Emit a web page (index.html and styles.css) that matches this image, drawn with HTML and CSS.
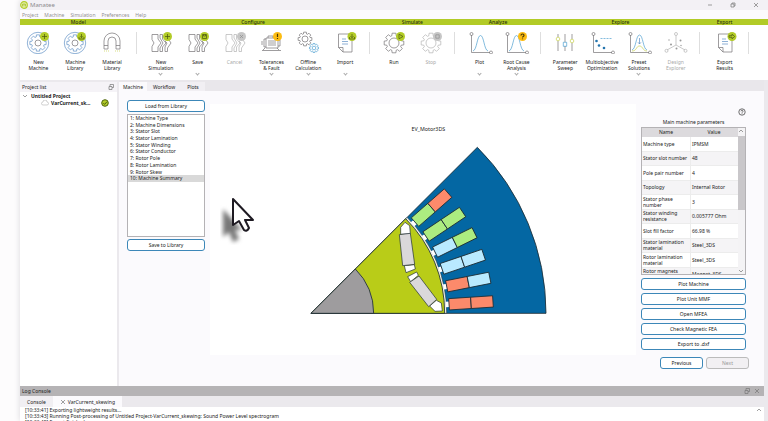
FILE: index.html
```html
<!DOCTYPE html>
<html lang="en">
<head>
<meta charset="utf-8">
<title>Manatee</title>
<link rel="stylesheet" href="styles.css">
</head>
<body>
<svg class="defs" aria-hidden="true">
  <defs>
    <path id="gear" vector-effect="non-scaling-stroke" d="M-2.2-7.2L-1.9-9.8 1.9-9.8 2.2-7.2 3.5-6.65 5.6-8.3 8.3-5.6 6.65-3.5 7.2-2.2 9.8-1.9 9.8 1.9 7.2 2.2 6.65 3.5 8.3 5.6 5.6 8.3 3.5 6.65 2.2 7.2 1.9 9.8-1.9 9.8-2.2 7.2-3.5 6.65-5.6 8.3-8.3 5.6-6.65 3.5-7.2 2.2-9.8 1.9-9.8-1.9-7.2-2.2-6.65-3.5-8.3-5.6-5.6-8.3-3.5-6.65Z"/>
    <g id="wheel">
      <circle class="steel" cx="18" cy="13" r="10.7"/>
      <use class="steel" href="#gear" transform="translate(18 13) scale(.83)"/>
      <circle cx="18" cy="13" r="3"/>
    </g>
    <g id="plates">
      <path d="M9 4.500h6v4.500l3 4-3 4v4.500H9V16.500l2-3.500-2-3.500z"/>
      <path d="M17 4.500h2.500V9l3.500 4-3.500 4v4.500H17V18l3-5-3-5z"/>
      <path d="M22 11l2 2-2 4v4.500h2.500V18l3.500-5-2-3"/>
    </g>
    <path id="sheet" d="M11.500 4H25v18H16l-4.500-4.500zM16 22v-4.500h-4.500"/>
    <g id="axes">
      <path d="M9.500 5v17.500H28"/><circle cx="9.500" cy="4" r="1.500"/><circle cx="29" cy="22.500" r="1.500"/>
    </g>
  </defs>
</svg>
<div class="window">
  <header class="titlebar">
    <svg class="logo" viewBox="0 0 8 8"><circle cx="4" cy="4" r="3.300" fill="#e9f2b5" stroke="#b2cc2c" stroke-width="1.200"/><path d="M2.500 5.500V3h3v2.500M4 3v2.500" fill="none" stroke="#a5bf2c" stroke-width=".8"/></svg>
    <h1>Manatee</h1>
    <div class="win-buttons">
      <button aria-label="Minimize"><svg viewBox="0 0 6 6"><path d="M1 3h4"/></svg></button>
      <button aria-label="Restore"><svg viewBox="0 0 6 6"><path d="M1 2h3v3H1zM2 2V1h3v3H4"/></svg></button>
      <button aria-label="Close"><svg viewBox="0 0 6 6"><path d="M1 1l4 4M5 1L1 5"/></svg></button>
    </div>
  </header>
  <nav class="menubar"><button>Project</button><button>Machine</button><button>Simulation</button><button>Preferences</button><button>Help</button></nav>

  <div class="ribbon">
    <section class="group n3 first"><h2>Model</h2><div class="tools">
      <button class="tool"><svg class="icon" viewBox="0 0 36 24"><use href="#wheel"/><g class="badge"><circle cx="24.500" cy="6.500" r="4.500"/><path d="M22 6.500h5M24.500 4v5"/></g></svg><span>New<br>Machine</span></button>
      <button class="tool"><svg class="icon" viewBox="0 0 36 24"><use href="#wheel"/><g class="badge"><circle cx="24.500" cy="6.500" r="4.500"/><path d="M24.500 4v3.500M23 6.200l1.500 1.500L26 6.200M22 7v2h5V7"/></g></svg><span>Machine<br>Library</span></button>
      <button class="tool"><svg class="icon" viewBox="0 0 36 24"><path d="M10 19v-8a8 8 0 0 1 16 0v8h-4v-8a4 4 0 0 0-8 0v8zM10 15.500h4M22 15.500h4"/><path class="lime" stroke-dasharray="1 1" d="M10 21h5M21 21h5"/></svg><span>Material<br>Library</span></button>
    </div></section>
    <section class="group n6"><h2>Configure</h2><div class="tools">
      <button class="tool"><svg class="icon" viewBox="0 0 36 24"><use href="#plates"/><g class="badge"><circle cx="24.500" cy="6.500" r="4.500"/><path d="M22 6.500h5M24.500 4v5"/></g></svg><span>New<br>Simulation</span><i class="more"></i></button>
      <button class="tool"><svg class="icon" viewBox="0 0 36 24"><use href="#plates"/><g class="badge"><circle cx="24.500" cy="6.500" r="4.500"/><path d="M22.500 4.500h4v4h-4zM23.500 4.500v1.500h2V4.500"/></g></svg><span>Save</span><i class="more"></i></button>
      <button class="tool" disabled><svg class="icon" viewBox="0 0 36 24"><use href="#plates"/><g class="badge"><circle cx="24.500" cy="6.500" r="4.500"/><path d="M23 5l3 3M26 5l-3 3"/></g></svg><span>Cancel</span></button>
      <button class="tool"><svg class="icon" viewBox="0 0 36 24"><path d="M13 8h12v10H13zM13 9h-2v8h2M9 11v4M25 10h2v6h-2M15 8V6h5v2M15 11h8M15 13h8M15 15h8M12 18l-2 2M24 18l2 2M9 20.500h19"/><g class="badge warn"><circle cx="24.500" cy="6.500" r="4.500"/><path d="M24.500 3.800v3.200M24.500 8v1"/></g></svg><span>Tolerances<br>&amp; Fault</span><i class="more"></i></button>
      <button class="tool"><svg class="icon" viewBox="0 0 36 24"><use href="#gear" transform="translate(15 9) scale(.7)"/><circle cx="15" cy="9" r="3"/><g class="sky"><use href="#gear" transform="translate(24 18) scale(.46)"/><circle cx="24" cy="18" r="1.800"/></g></svg><span>Offline<br>Calculation</span><i class="more"></i></button>
      <button class="tool"><svg class="icon" viewBox="0 0 36 24"><use href="#sheet"/><path class="blue" d="M15 9h4M15 11.500h6M15 14h6"/><g class="badge"><circle cx="25" cy="6.500" r="4.500"/><path d="M25 4v3.500M23.500 6.200l1.500 1.500 1.500-1.500M22.500 7v2h5V7"/></g></svg><span>Import</span><i class="more"></i></button>
    </div></section>
    <section class="group n2"><h2>Simulate</h2><div class="tools">
      <button class="tool"><svg class="icon" viewBox="0 0 36 24"><use href="#gear" transform="translate(18 13)"/><circle cx="18" cy="13" r="5"/><g class="badge"><circle cx="24.500" cy="6.500" r="4.500"/><path d="M23 4.200l4 2.300-4 2.300z"/></g></svg><span>Run</span></button>
      <button class="tool" disabled><svg class="icon" viewBox="0 0 36 24"><use href="#gear" transform="translate(18 13)"/><circle cx="18" cy="13" r="5"/><g class="badge"><circle cx="24.500" cy="6.500" r="4.500"/><path d="M22.800 4.800h3.400v3.400h-3.400z"/></g></svg><span>Stop</span></button>
    </div></section>
    <section class="group n2"><h2>Analyze</h2><div class="tools">
      <button class="tool"><svg class="icon" viewBox="0 0 36 24"><use href="#axes"/><path class="sky" d="M11 21c4-1 4-15.500 7.500-15.500S22 20 26 21"/></svg><span>Plot</span><i class="more"></i></button>
      <button class="tool"><svg class="icon" viewBox="0 0 36 24"><use href="#axes"/><path class="sky" d="M11 21c4-1 4-15.500 7.500-15.500S22 20 26 21"/><g class="badge warn"><circle cx="24.500" cy="6.500" r="4.500"/><path d="M23 5.500c0-2 3-2 3 0 0 1-1.500 1-1.500 2M24.500 8.500v.8"/></g></svg><span>Root Cause<br>Analysis</span><i class="more"></i></button>
    </div></section>
    <section class="group n4"><h2>Explore</h2><div class="tools">
      <button class="tool"><svg class="icon" viewBox="0 0 36 24"><path d="M11 4v3M11 11v10M18 4v8M18 16v5M25 4v5M25 13v8"/><circle class="lime" cx="11" cy="9" r="1.800"/><path class="sky" d="M16.300 12.300h3.400v4h-3.400z"/><circle class="lime" cx="25" cy="11" r="1.800"/></svg><span>Parameter<br>Sweep</span></button>
      <button class="tool"><svg class="icon" viewBox="0 0 36 24"><use href="#axes"/><g class="dots"><circle cx="12.500" cy="11" r="1.300"/><circle cx="15" cy="15.500" r="1.300"/><circle cx="20" cy="18" r="1.300"/></g><path class="sky" stroke-dasharray="2 1" d="M16.500 8.500h11"/></svg><span>Multiobjective<br>Optimization</span></button>
      <button class="tool"><svg class="icon" viewBox="0 0 36 24"><use href="#axes"/><path class="sky" d="M11 20c4-1 4-15 7.500-15S22 19 26 20"/><path class="lime" d="M11 21c5 0 4-5 7.500-5s3 5 7.500 5"/><path class="blue" d="M18.500 8v6M17 12.300l1.500 1.700 1.500-1.700"/></svg><span>Preset<br>Solutions</span><i class="more"></i></button>
      <button class="tool" disabled><svg class="icon" viewBox="0 0 36 24"><path d="M18 5.500V15L9 20M18 15l9 5"/><circle cx="18" cy="4" r="1.500"/><circle cx="8.500" cy="20.800" r="1.500"/><circle cx="27.500" cy="20.800" r="1.500"/><g class="dots"><circle cx="13" cy="14.500" r="1"/><circle cx="22.500" cy="10.500" r="1"/><circle cx="18.500" cy="18.500" r="1"/><circle cx="11" cy="10" r=".7"/><circle cx="23" cy="15.500" r=".7"/></g></svg><span>Design<br>Explorer</span></button>
    </div></section>
    <section class="group n1"><h2>Export</h2><div class="tools">
      <button class="tool"><svg class="icon" viewBox="0 0 36 24"><use href="#sheet"/><path class="blue" d="M15 9h4M15 11.500h6M15 14h6"/><g class="badge"><circle cx="25" cy="6.500" r="4.500"/><path d="M22 5.700h3V4.200l2.700 2.300L25 8.800V7.300h-3z"/></g></svg><span>Export<br>Results</span></button>
    </div></section>
    <div class="tail"></div>
  </div>

  <div class="workspace">
    <aside class="projects">
      <div class="panel-head"><h2>Project list</h2><button aria-label="Float panel"><svg viewBox="0 0 6 6"><path d="M1 2.500h3v3H1zM2 2.500v-2h3.500v3H4"/></svg></button></div>
      <div class="tree">
        <div class="root"><svg viewBox="0 0 6 6"><path d="M1 2l2 2 2-2"/></svg>Untitled Project</div>
        <div class="leaf"><svg class="cloud" viewBox="0 0 8 6"><path d="M2 5a1.500 1.500 0 0 1 0-3 2 2 0 0 1 4 0 1.500 1.500 0 0 1 0 3z"/></svg><span>VarCurrent_sk...</span><svg class="ok" viewBox="0 0 8 8"><circle cx="4" cy="4" r="3.300"/><path d="M2.300 4l1.300 1.400L6 2.700"/></svg></div>
      </div>
    </aside>
    <main class="main">
      <div class="tabs"><button class="active">Machine</button><button>Workflow</button><button>Plots</button></div>
      <div class="machine">
        <div class="steps">
          <button class="btn">Load from Library</button>
          <div class="list"><ol>
            <li>1: Machine Type</li><li>2: Machine Dimensions</li><li>3: Stator Slot</li><li>4: Stator Lamination</li><li>5: Stator Winding</li><li>6: Stator Conductor</li><li>7: Rotor Pole</li><li>8: Rotor Lamination</li><li>9: Rotor Skew</li><li class="current">10: Machine Summary</li>
          </ol></div>
          <button class="btn">Save to Library</button>
        </div>
        <figure class="plot">
          <svg viewBox="-270 -48 1278 753" role="img" aria-label="Machine section">
            <text x="385" y="33" text-anchor="middle">EV_Motor3DS</text>
            <g stroke="#1c2b33" stroke-width="2.500">
              <path fill="#0467a3" d="M33 580L532 82A705 705 0 0 1 738 580z"/>
              <path fill="#f4f4ee" stroke-width="1.500" d="M33 580L321 292A407 407 0 0 1 440 580z"/>
              <path fill="#b9cc18" d="M33 580L317 296A401 401 0 0 1 434 580z"/>
              <path fill="#9e9c9e" d="M33 580L166 447A188 188 0 0 1 221 580z"/>
              <g fill="#fff" stroke-width="2">
                <path d="M302 343V322L315 307 329 317 331 341zM313 437L343 434 346 447 318 458zM323 470L350 456 355 466 332 485zM389 558L409 541 424 549 427 573 405 574z"/>
                <path fill="#dad8da" d="M298 344L331 340 344 433 308 437zM329 487L357 468 410 538 386 560z"/>
              </g>
              <g transform="translate(33 580)">
                <g transform="rotate(-3.750)"><path class="mouth" d="M405-8h11V8h-11z"/><path class="coral" d="M415-17h66v34h-66z"/><path class="coral" d="M481-17h66v34h-66z"/></g>
                <g transform="rotate(-11.250)"><path class="mouth" d="M405-8h11V8h-11z"/><path class="coral" d="M415-17h66v34h-66z"/><path class="ice" d="M481-17h66v34h-66z"/></g>
                <g transform="rotate(-18.750)"><path class="mouth" d="M405-8h11V8h-11z"/><path class="ice" d="M415-17h66v34h-66z"/><path class="ice" d="M481-17h66v34h-66z"/></g>
                <g transform="rotate(-26.250)"><path class="mouth" d="M405-8h11V8h-11z"/><path class="ice" d="M415-17h66v34h-66z"/><path class="mint" d="M481-17h66v34h-66z"/></g>
                <g transform="rotate(-33.750)"><path class="mouth" d="M405-8h11V8h-11z"/><path class="mint" d="M415-17h66v34h-66z"/><path class="mint" d="M481-17h66v34h-66z"/></g>
                <g transform="rotate(-41.250)"><path class="mouth" d="M405-8h11V8h-11z"/><path class="mint" d="M415-17h66v34h-66z"/><path class="coral" d="M481-17h66v34h-66z"/></g>
              </g>
            </g>
          </svg>
        </figure>
        <div class="summary">
          <button class="help" aria-label="Help"><svg viewBox="0 0 8 8"><circle cx="4" cy="4" r="3.200"/><path d="M3 3.300c0-1.500 2-1.500 2 0 0 .8-1 .7-1 1.500M4 5.400v.7"/></svg></button>
          <h3>Main machine parameters</h3>
          <div class="grid-box">
            <table>
              <thead><tr><th>Name</th><th>Value</th></tr></thead>
              <tbody>
                <tr><td>Machine type</td><td>IPMSM</td></tr>
                <tr><td>Stator slot number</td><td>48</td></tr>
                <tr><td>Pole pair number</td><td>4</td></tr>
                <tr><td>Topology</td><td>Internal Rotor</td></tr>
                <tr><td>Stator phase<br>number</td><td>3</td></tr>
                <tr><td>Stator winding<br>resistance</td><td>0.005777 Ohm</td></tr>
                <tr><td>Slot fill factor</td><td>66.98 %</td></tr>
                <tr><td>Stator lamination<br>material</td><td>Steel_3DS</td></tr>
                <tr><td>Rotor lamination<br>material</td><td>Steel_3DS</td></tr>
                <tr><td>Rotor magnets<br>material</td><td>Magnet_3DS</td></tr>
              </tbody>
            </table>
            <div class="scroll"><svg viewBox="0 0 6 6"><path d="M1 4l2-2 2 2"/></svg><div class="thumb"></div><svg viewBox="0 0 6 6"><path d="M1 2l2 2 2-2"/></svg></div>
          </div>
          <div class="actions">
            <button class="btn">Plot Machine</button><button class="btn">Plot Unit MMF</button><button class="btn">Open MFEA</button><button class="btn">Check Magnetic FEA</button><button class="btn">Export to .dxf</button>
          </div>
          <div class="pager"><button class="btn">Previous</button><button class="btn" disabled>Next</button></div>
        </div>
      </div>
    </main>
  </div>

  <section class="log">
    <div class="log-head"><h2>Log Console</h2><button aria-label="Float console"><svg viewBox="0 0 6 6"><path d="M1 2.500h3v3H1zM2 2.500v-2h3.500v3H4"/></svg></button><button aria-label="Close console"><svg viewBox="0 0 6 6"><path d="M1 1l4 4M5 1L1 5"/></svg></button></div>
    <div class="log-tabs"><button>Console</button><button class="active"><svg viewBox="0 0 6 6"><path d="M1 1l4 4M5 1L1 5"/></svg>VarCurrent_skewing</button></div>
    <div class="lines">
      <div><p>[10:33:41] Exporting lightweight results...</p><p>[10:33:43] Running Post-processing of Untitled Project-VarCurrent_skewing: Sound Power Level spectrogram</p><p>[10:33:45] Export finished.</p></div>
      <svg viewBox="0 0 6 6"><path d="M1 4l2-2 2 2"/></svg>
    </div>
  </section>
</div>
<svg class="cursor" viewBox="0 0 36 50" aria-hidden="true"><path class="shade" d="M3 14v28l6-5 4 10 6-3-4-9h7z"/><path class="arrow" d="M13 4v26l6-4 5 9q3 2 5-2l-4-8h8z"/></svg>
</body>
</html>
```
FILE: styles.css
```css
* { box-sizing: border-box; }
body {
  margin: 0;
  height: 100vh;
  overflow: hidden;
  background: #fdfcfd;
  color: #222;
  font: 5px/6px "Noto Sans", "Open Sans", sans-serif;
}
h1, h2, h3, p, ol, figure { margin: 0; padding: 0; font: inherit; }
button {
  margin: 0;
  padding: 0;
  border: 0;
  background: none;
  color: inherit;
  font: inherit;
}
svg { display: block; flex: none; }
.defs { position: absolute; width: 0; height: 0; }

.window {
  display: flex;
  flex-direction: column;
  height: 100vh;
  margin-left: 20px;
  background: #ebe9ed;
  box-shadow: 0 0 6px #dad8dc;
}
.window button svg, .tree svg, .scroll svg, .lines svg {
  width: 6px;
  height: 6px;
  fill: none;
  stroke: #777;
  stroke-width: .7;
}

.titlebar { display: flex; align-items: center; gap: 2px; height: 10px; background: #f3f1f5; color: #8d8b8e; }
.logo { width: 8px; height: 8px; }
.titlebar h1 { font-size: 6px; }
.win-buttons { display: flex; gap: 17px; margin-left: auto; padding-right: 9px; }
.menubar { display: flex; gap: 6px; height: 9px; padding: 0 2px; background: #fcfbfd; color: #929092; }

.ribbon { display: flex; height: 61px; background: #fff; }
.group { position: relative; padding: 0 6px; text-align: center; }
.first { padding-left: 0; }
.n1 { flex: 1 1 0; }
.n2 { flex: 2 1 0; }
.n3 { flex: 3 1 0; }
.n4 { flex: 4 1 0; }
.n6 { flex: 6 1 0; }
.tail { flex: none; width: 19px; }
.group h2, .tail::before { display: block; height: 6px; margin: 0 -6px; background: #b2cb27; color: #29300d; font-weight: 500; }
.first h2 { margin-left: 0; }
.tail::before { content: ""; margin: 0; }
.group::after { content: ""; position: absolute; right: 0; top: 13px; width: 1px; height: 22px; background: #dedede; }
.tools { display: flex; padding-top: 5px; }
.tool { display: flex; flex: 1 1 0; min-width: 0; flex-direction: column; align-items: center; height: 48px; white-space: nowrap; }
.ribbon .tool .icon { width: 36px; height: 24px; margin-bottom: 5px; stroke: #757376; stroke-width: .7; }
.steel, .icon .blue { stroke: #5f8fc4; }
.icon .sky { stroke: #4d9fd0; }
.icon .lime { stroke: #c5d04d; }
.icon .dots { fill: #2374ad; stroke: none; }
.icon .badge { fill: #b2cb27; stroke: #47550f; }
.icon .badge circle { stroke: none; }
.icon .badge path { fill: none; }
.icon .warn { fill: #fcbc12; stroke: #4c3a05; stroke-width: 1.200; }
.ribbon .tool:disabled { color: #a9a9a9; }
.ribbon .tool:disabled .icon { stroke: #b3b3b3; }
.tool:disabled .icon .badge { fill: #c6c6c6; stroke: #8e8e8e; }
.tool:disabled .icon .dots { fill: #999; }
.more { width: 3px; height: 3px; margin-top: auto; margin-bottom: 3px; border: solid #aaa; border-width: 0 1px 1px 0; transform: rotate(45deg); }

.workspace { display: flex; flex: 1; min-height: 0; margin-right: 4px; }
.projects { width: 97px; padding-top: 2px; }
.panel-head { display: flex; justify-content: space-between; align-items: center; height: 10px; padding: 0 3px 0 2px; background: #f5f3f7; }
.tree { height: calc(100% - 10px); padding-top: 1px; background: #fff; font-weight: 700; }
.root { display: flex; align-items: center; gap: 3px; height: 6px; padding-left: 2px; }
.leaf { display: flex; align-items: center; gap: 2px; height: 8px; padding: 0 8px 0 21px; }
.tree .cloud { width: 8px; stroke: #bbb; }
.tree .ok { width: 8px; height: 8px; margin-left: auto; fill: #b2cb27; stroke: #4f6410; stroke-width: 1; }
.main { display: flex; flex: 1; flex-direction: column; margin-left: 2px; min-width: 0; }
.tabs { display: flex; height: 11px; padding-top: 2px; background: #e9e7eb; }
.tabs button { padding: 0 6px; background: #f1eff3; }
.tabs .active { padding: 0 4px; background: #fbfafd; }
.machine { display: flex; flex: 1; gap: 5px; padding: 9px 15px 0 8px; background: #fbfafd; }
.steps { display: flex; flex-direction: column; gap: 2px; width: 78px; height: 151px; }
.list { flex: 1; border: 1px solid #b4b2b5; background: #fff; }
.steps ol { display: grid; grid-template-rows: repeat(10, 1fr); height: 67px; list-style: none; }
.steps li { padding-left: 2px; line-height: 6px; }
.steps .current { background: #d9d9d9; }
.btn { height: 12px; border: 1px solid #3c87b8; border-radius: 3px; background: #fff; }
.btn:disabled { border-color: #bbb; background: #f2f0f3; color: #999; }
.plot { flex: 1; align-self: flex-start; margin-top: 4px; background: #fff; }
.plot svg { width: 100%; }
.plot text { fill: #222; stroke: none; font-size: 16px; }
.mouth { fill: #fff; stroke: none; }
.coral { fill: #fc8a6b; }
.ice { fill: #b9eaff; }
.mint { fill: #acec80; }

.summary { display: flex; flex-direction: column; width: 108px; padding: 8px 3px 0 0; }
.help { align-self: flex-end; }
.summary .help svg { width: 8px; height: 8px; stroke: #333; }
.summary h3 { margin: 3px 0 2px; text-align: center; }
.grid-box { display: flex; height: 148px; overflow: hidden; border: 1px solid #b4b2b5; background: #fff; }
table { display: grid; flex: 1; grid-template-rows: 9px 145px; height: 154px; line-height: 6px; }
thead, tbody { display: grid; }
tbody { grid-template-rows: repeat(10, 1fr); }
tr { display: grid; grid-template-columns: 1fr 1fr; min-height: 0; }
th { padding: 1px 0; background: #dcdadd; font-weight: 400; }
td { display: grid; align-content: center; padding: 0 1px; border-bottom: 1px solid #ececec; white-space: nowrap; }
td + td { border-left: 1px solid #ececec; }
tbody tr:nth-child(even) { background: #f5f4f6; }
.scroll { display: flex; flex-direction: column; width: 7px; background: #f4f3f5; }
.thumb { height: 74px; margin: 2px 0 auto; background: #c9c7ca; }
.actions { display: flex; flex-direction: column; gap: 3px; padding-top: 3px; }
.pager { display: flex; gap: 3px; margin: 7px -3px 0 19px; }
.pager .btn { flex: 1; }

.log { margin-right: 4px; }
.log-head { display: flex; gap: 4px; align-items: center; height: 10px; padding: 0 4px 0 2px; background: #b5b3b5; }
.log-head h2 { margin-right: auto; }
.log-tabs { display: flex; height: 11px; background: #ebe9ed; }
.log-tabs button { display: flex; align-items: center; gap: 2px; padding: 0 7px; background: #f1eff3; }
.log-tabs .active { background: #fbfafd; }
.lines { display: flex; justify-content: space-between; height: 14px; overflow: hidden; padding: 0 2px 0 5px; background: #fff; }

.cursor { position: absolute; left: 220px; top: 195px; width: 36px; height: 50px; }
.shade { fill: #777; filter: blur(2px); }
.arrow { fill: #fff; stroke: #1e1a22; stroke-width: 2; stroke-linejoin: round; }
```
